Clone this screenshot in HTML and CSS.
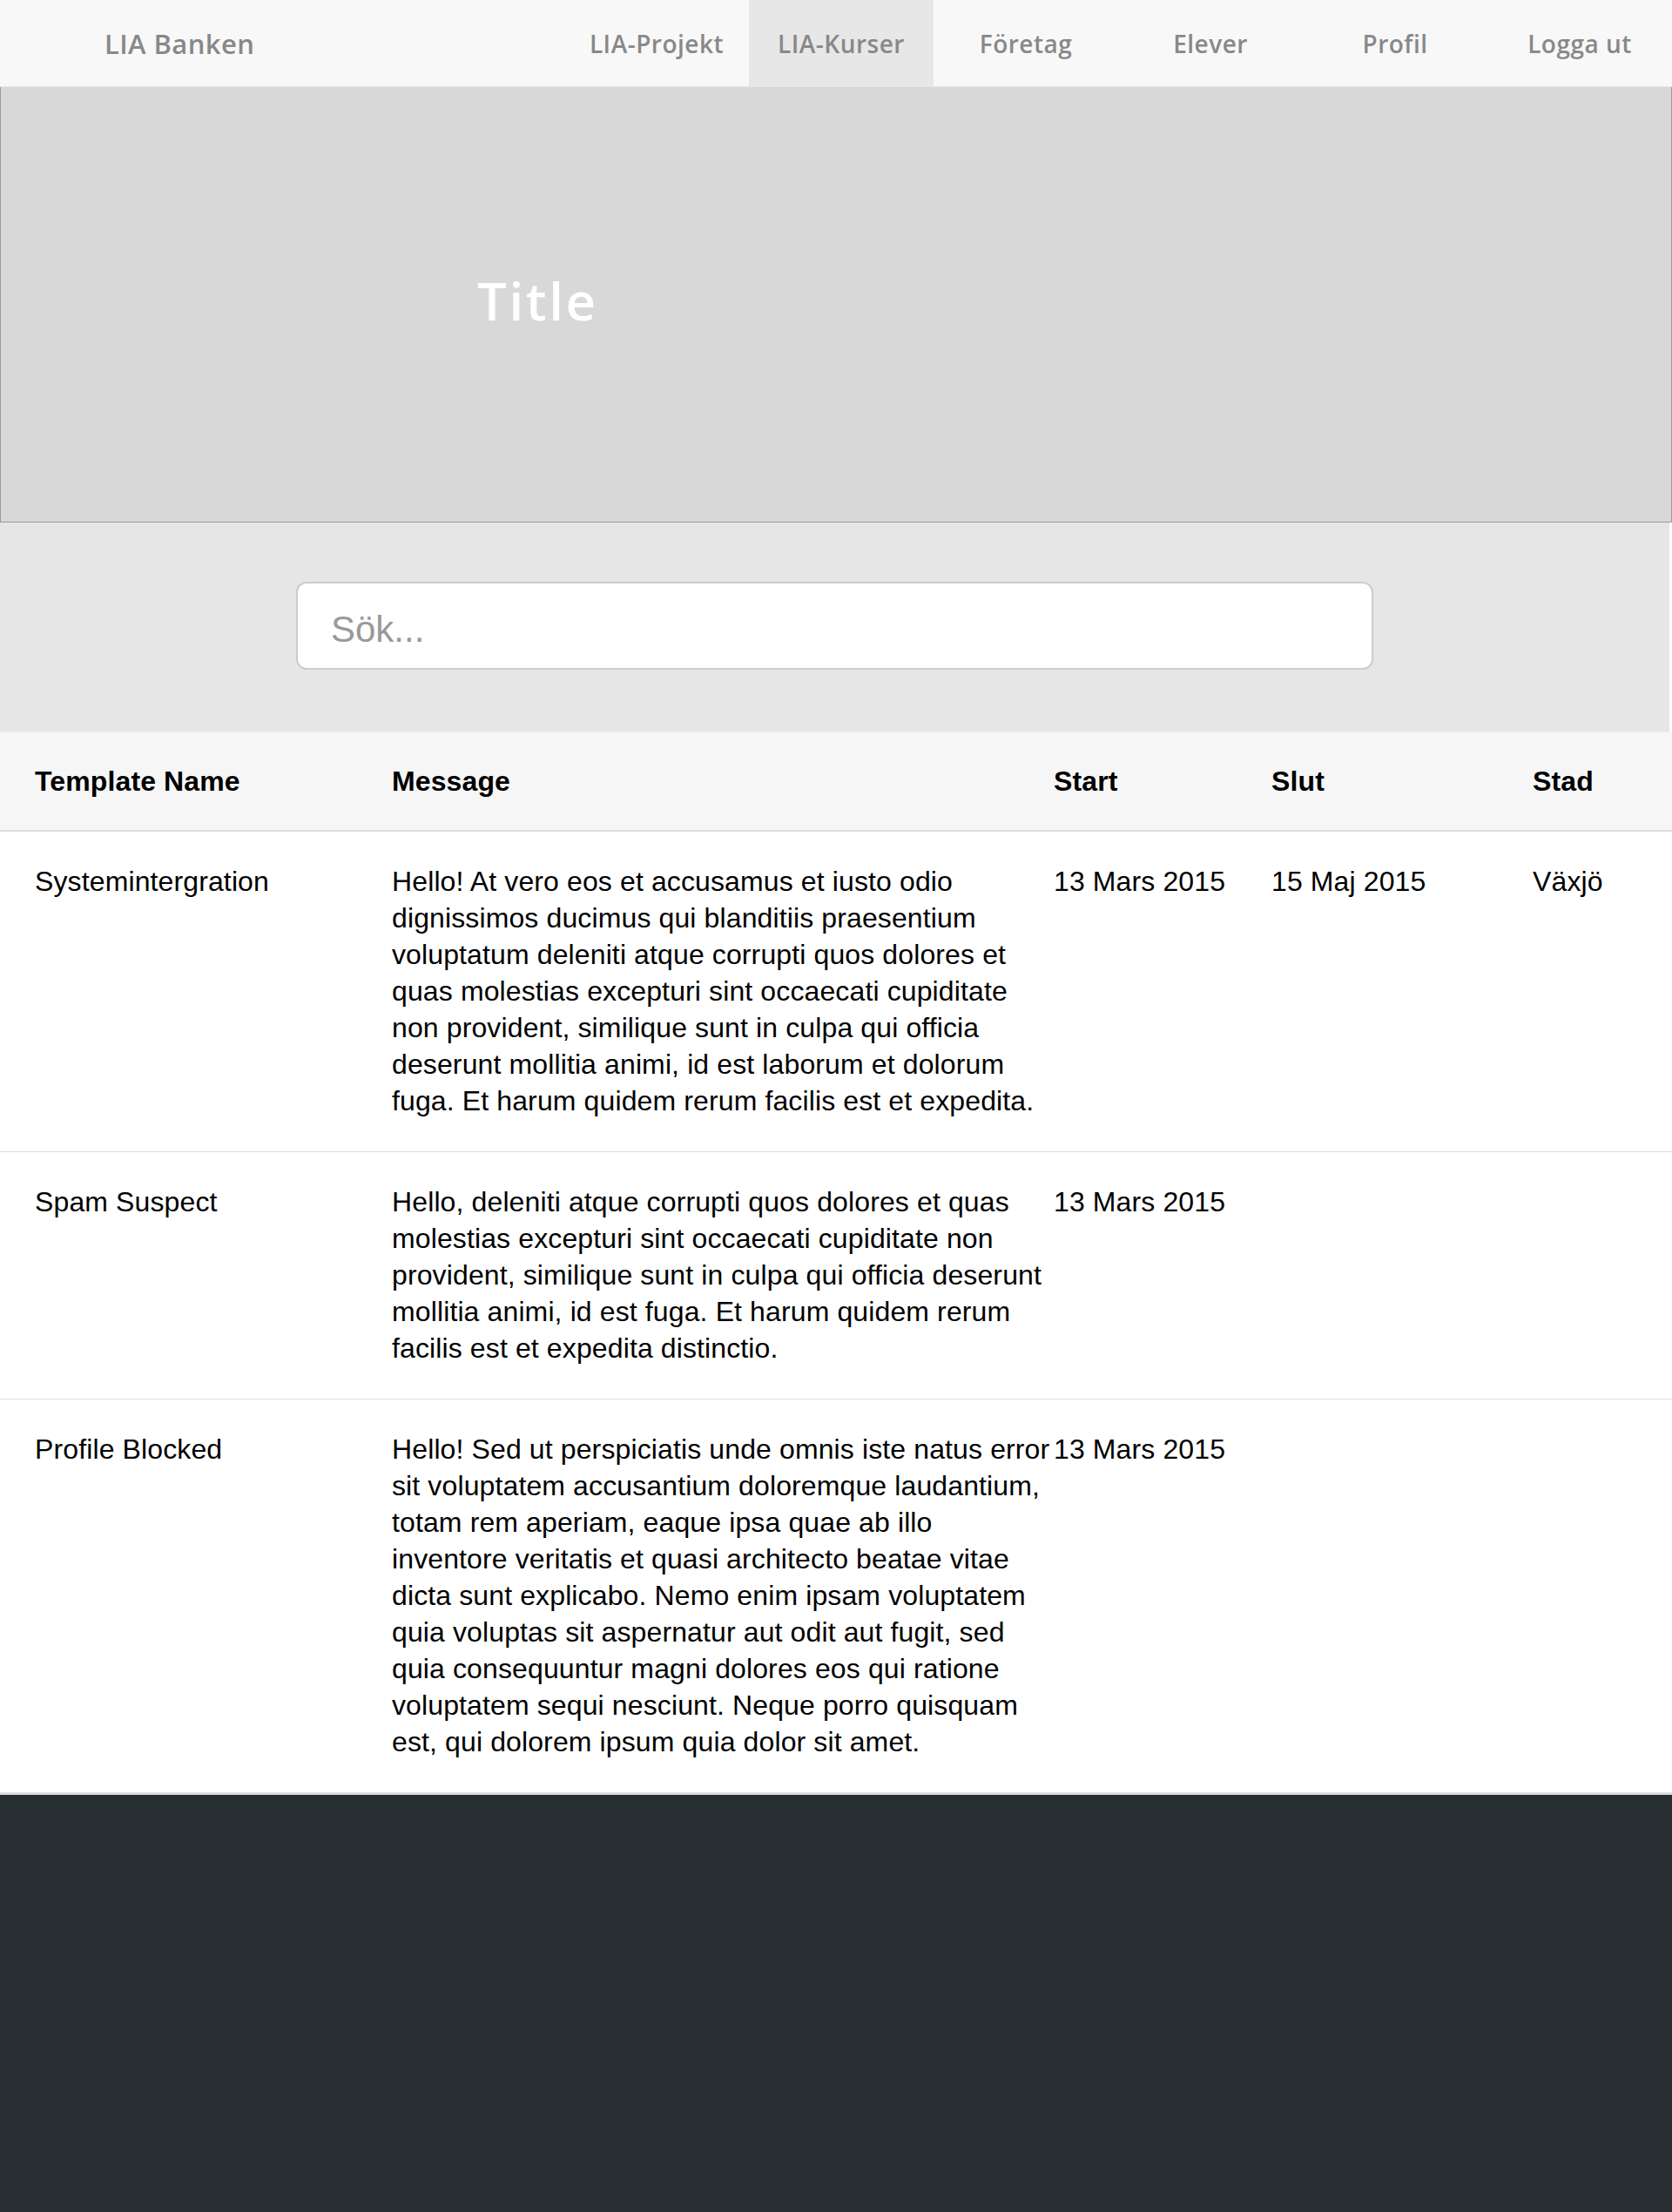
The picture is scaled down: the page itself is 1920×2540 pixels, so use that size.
FILE: index.html
```html
<!DOCTYPE html>
<html lang="sv">
<head>
<meta charset="utf-8">
<title>LIA Banken</title>
<link rel="stylesheet" href="styles.css">
</head>
<body>
<nav class="navbar">
  <div class="brand">LIA Banken</div>
  <ul class="menu">
    <li class="menu-item">LIA-Projekt</li>
    <li class="menu-item active">LIA-Kurser</li>
    <li class="menu-item">Företag</li>
    <li class="menu-item">Elever</li>
    <li class="menu-item">Profil</li>
    <li class="menu-item">Logga ut</li>
  </ul>
</nav>
<header class="hero">
  <h1 class="hero-title">Title</h1>
</header>
<section class="search">
  <input class="search-input" type="text" placeholder="Sök...">
</section>
<table class="templates">
  <colgroup>
    <col class="c-name"><col class="c-msg"><col class="c-start"><col class="c-slut"><col class="c-stad">
  </colgroup>
  <thead>
    <tr><th>Template Name</th><th>Message</th><th>Start</th><th>Slut</th><th>Stad</th></tr>
  </thead>
  <tbody>
    <tr>
      <td>Systemintergration</td>
      <td>Hello! At vero eos et accusamus et iusto odio dignissimos ducimus qui blanditiis praesentium voluptatum deleniti atque corrupti quos dolores et quas molestias excepturi sint occaecati cupiditate non provident, similique sunt in culpa qui officia deserunt mollitia animi, id est laborum et dolorum fuga. Et harum quidem rerum facilis est et expedita.</td>
      <td>13 Mars 2015</td>
      <td>15 Maj 2015</td>
      <td>Växjö</td>
    </tr>
    <tr>
      <td>Spam Suspect</td>
      <td>Hello, deleniti atque corrupti quos dolores et quas molestias excepturi sint occaecati cupiditate non provident, similique sunt in culpa qui officia deserunt mollitia animi, id est fuga. Et harum quidem rerum facilis est et expedita distinctio.</td>
      <td>13 Mars 2015</td>
      <td></td>
      <td></td>
    </tr>
    <tr>
      <td>Profile Blocked</td>
      <td>Hello! Sed ut perspiciatis unde omnis iste natus error sit voluptatem accusantium doloremque laudantium, totam rem aperiam, eaque ipsa quae ab illo inventore veritatis et quasi architecto beatae vitae dicta sunt explicabo. Nemo enim ipsam voluptatem quia voluptas sit aspernatur aut odit aut fugit, sed quia consequuntur magni dolores eos qui ratione voluptatem sequi nesciunt. Neque porro quisquam est, qui dolorem ipsum quia dolor sit amet.</td>
      <td>13 Mars 2015</td>
      <td></td>
      <td></td>
    </tr>
  </tbody>
</table>
<footer class="footer"></footer>
</body>
</html>
```

FILE: styles.css
```css
* { box-sizing: border-box; }

body {
  margin: 0;
  background: #ffffff;
  font-family: "Liberation Sans", Arial, Helvetica, sans-serif;
  color: #000;
}

.navbar {
  display: flex;
  align-items: stretch;
  height: 100px;
  background: #f8f8f8;
  border-bottom: 1px solid #e7e7e7;
}

.brand {
  display: flex;
  align-items: center;
  padding-left: 120px;
  font-family: "Open Sans", sans-serif;
  font-weight: 600;
  font-size: 31px;
  letter-spacing: 0.4px;
  color: #888888;
}

.menu {
  display: flex;
  margin: 0 0 0 auto;
  padding: 0;
  list-style: none;
}

.menu-item {
  display: flex;
  align-items: center;
  justify-content: center;
  width: 212px;
  font-family: "Open Sans", sans-serif;
  font-weight: 600;
  font-size: 28px;
  letter-spacing: 0.5px;
  color: #888888;
}

.menu-item.active {
  background: #e7e7e7;
}

.hero {
  display: flex;
  align-items: center;
  height: 500px;
  padding: 0 0 10px 547px;
  background: #d8d8d8;
  border: 1px solid #9c9c9c;
  border-top: none;
}

.hero-title {
  margin: 0;
  font-family: "Open Sans", sans-serif;
  font-weight: 600;
  font-size: 60px;
  line-height: 1;
  letter-spacing: 2.6px;
  color: #ffffff;
}

.search {
  height: 241px;
  margin-right: 3px;
  padding-top: 68px;
  background: #e6e6e6;
  border-bottom: 1px solid #ededed;
}

.search-input {
  display: block;
  width: 1237px;
  height: 101px;
  margin: 0 auto;
  padding: 8px 0 0 38px;
  border: 2px solid #cccccc;
  border-radius: 12px;
  background: #ffffff;
  font-family: "Liberation Sans", Arial, sans-serif;
  font-size: 42px;
  color: #555;
  outline: none;
}

.search-input::placeholder {
  color: #999999;
}

.templates {
  width: 1920px;
  border-collapse: collapse;
  table-layout: fixed;
  font-size: 32px;
  line-height: 42px;
  letter-spacing: 0.12px;
}

.c-name { width: 450px; }
.c-msg { width: 760px; }
.c-start { width: 250px; }
.c-slut { width: 300px; }
.c-stad { width: 160px; }

.templates th,
.templates td {
  padding: 0;
  text-align: left;
  vertical-align: top;
}

.templates th:first-child,
.templates td:first-child {
  padding-left: 40px;
}

.templates thead tr {
  background: #f6f6f6;
  border-bottom: 2px solid #dddddd;
}

.templates th {
  padding-top: 35px;
  padding-bottom: 35px;
  font-weight: bold;
}

.templates tbody tr {
  border-bottom: 1px solid #dddddd;
}

.templates td {
  padding-top: 36px;
  padding-bottom: 37px;
  font-weight: normal;
}

.templates tbody tr:last-child {
  border-bottom: 3px solid #dedede;
}

.footer {
  height: 490px;
  background: #282f32;
}
```
